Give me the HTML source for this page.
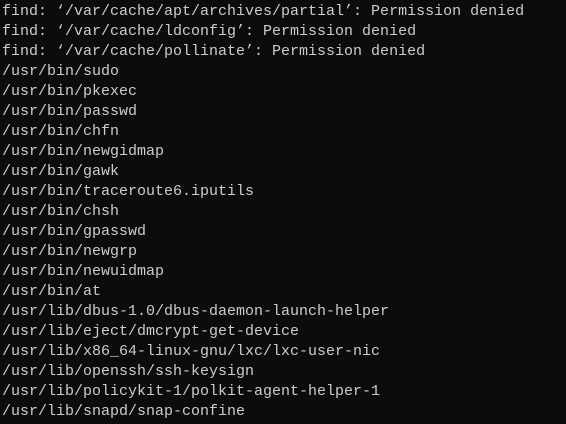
<!DOCTYPE html>
<html><head><style>
html,body{margin:0;padding:0;background:#0c0c0c;width:566px;height:424px;overflow:hidden}
pre{margin:0;padding:2px 0 0 2px;font-family:"Liberation Mono",monospace;font-size:15px;line-height:20px;color:#cccccc}
</style></head><body><pre>find: ‘/var/cache/apt/archives/partial’: Permission denied
find: ‘/var/cache/ldconfig’: Permission denied
find: ‘/var/cache/pollinate’: Permission denied
/usr/bin/sudo
/usr/bin/pkexec
/usr/bin/passwd
/usr/bin/chfn
/usr/bin/newgidmap
/usr/bin/gawk
/usr/bin/traceroute6.iputils
/usr/bin/chsh
/usr/bin/gpasswd
/usr/bin/newgrp
/usr/bin/newuidmap
/usr/bin/at
/usr/lib/dbus-1.0/dbus-daemon-launch-helper
/usr/lib/eject/dmcrypt-get-device
/usr/lib/x86_64-linux-gnu/lxc/lxc-user-nic
/usr/lib/openssh/ssh-keysign
/usr/lib/policykit-1/polkit-agent-helper-1
/usr/lib/snapd/snap-confine</pre></body></html>
